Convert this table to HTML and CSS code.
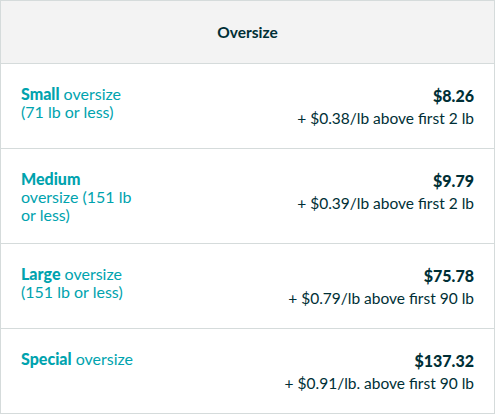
FILE: index.html
```html
<!DOCTYPE html>
<html lang="en">
<head>
  <meta charset="UTF-8" />
  <meta name="viewport" content="width=device-width, initial-scale=1.0" />
  <title>Oversize fees</title>
  <link rel="stylesheet" href="styles.css">
</head>
<body>
  <div class="fee-table">
    <div class="fee-header">Oversize</div>

    <div class="fee-row">
      <div class="tier"><b>Small</b> oversize (71 lb or less)</div>
      <div class="price">
        <div class="amount">$8.26</div>
        <div class="extra">+ $0.38/lb above first 2 lb</div>
      </div>
    </div>

    <div class="fee-row">
      <div class="tier"><b>Medium</b> oversize (151 lb or less)</div>
      <div class="price">
        <div class="amount">$9.79</div>
        <div class="extra">+ $0.39/lb above first 2 lb</div>
      </div>
    </div>

    <div class="fee-row">
      <div class="tier"><b>Large</b> oversize (151 lb or less)</div>
      <div class="price">
        <div class="amount">$75.78</div>
        <div class="extra">+ $0.79/lb above first 90 lb</div>
      </div>
    </div>

    <div class="fee-row">
      <div class="tier"><b>Special</b> oversize</div>
      <div class="price">
        <div class="amount">$137.32</div>
        <div class="extra">+ $0.91/lb. above first 90 lb</div>
      </div>
    </div>
  </div>
</body>
</html>
```

FILE: styles.css
```css
body {
  margin: 0;
  font-family: Lato, "Noto Sans", sans-serif;
  background-color: #fff;
}

.fee-table {
  width: 495px;
  height: 414px;
  box-sizing: border-box;
  border: 1px solid #d5dbdb;
  display: flex;
  flex-direction: column;
}

.fee-header {
  height: 62px;
  background-color: #f3f3f3;
  border-bottom: 1px solid #d5dbdb;
  display: flex;
  align-items: center;
  justify-content: center;
  font-weight: bold;
  font-size: 15.5px;
  color: #002f36;
}

.fee-row {
  display: flex;
  justify-content: space-between;
  padding: 21px 20px 19px 20px;
  border-bottom: 1px solid #d5dbdb;
}

.fee-row:last-child {
  border-bottom: none;
  flex: 1;
}

.tier {
  width: 116px;
  font-size: 16px;
  line-height: 18px;
  color: #00a3ae;
}

.tier b {
  font-weight: 900;
}

.price {
  text-align: right;
  color: #002f36;
  font-size: 15.5px;
  line-height: 22px;
}

.amount {
  font-weight: 900;
  font-size: 16px;
}
```
